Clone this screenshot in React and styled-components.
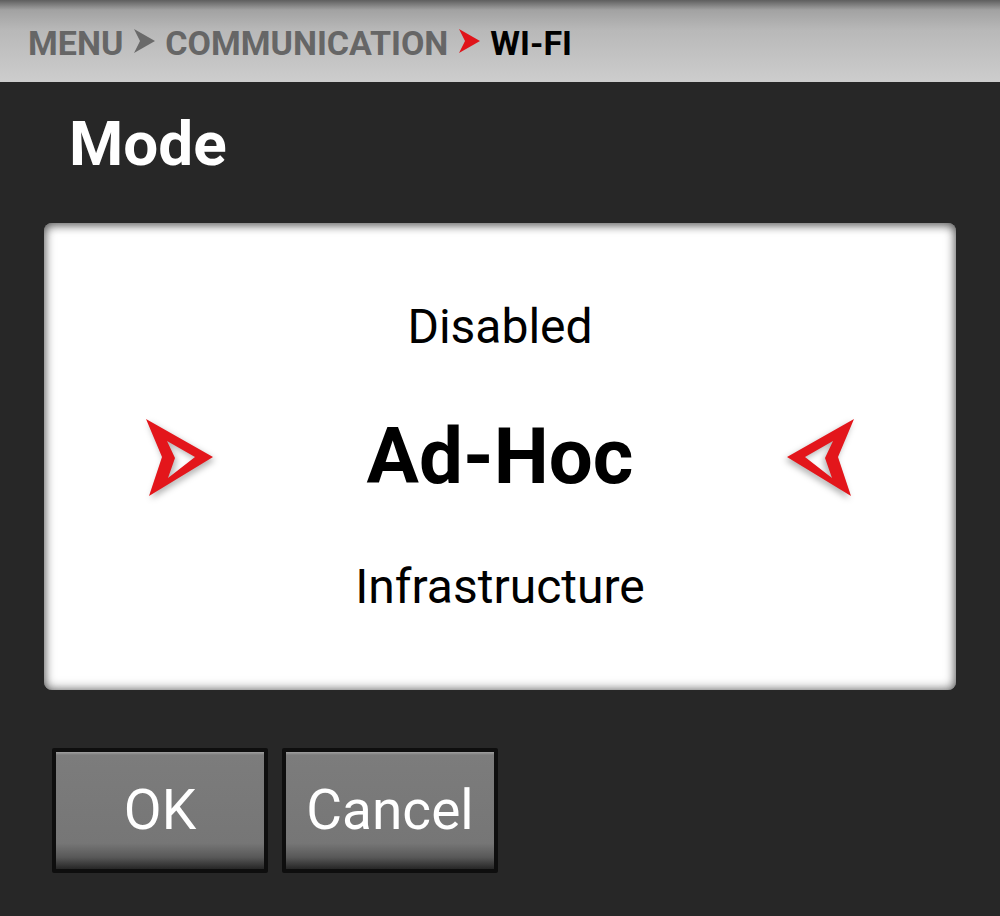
import { styled, createGlobalStyle } from "styled-components";

const GlobalStyle = createGlobalStyle`
  body {
    margin: 0;
    background: #272727;
    font-family: Roboto, "Liberation Sans", sans-serif;
  }
`;

const Screen = styled.div`
  width: 1000px;
  height: 916px;
  background: #272727;
  display: flex;
  flex-direction: column;
  overflow: hidden;
`;

const Header = styled.header`
  height: 82px;
  flex-shrink: 0;
  display: flex;
  align-items: center;
  gap: 10px;
  padding-left: 28px;
  box-sizing: border-box;
  background: linear-gradient(#5e5e5e 0px, #a2a2a2 10px, #b8b8b8 30px, #cdcdcd 100%);
`;

const Crumb = styled.span`
  font-size: 34px;
  font-weight: 700;
  line-height: 34px;
  color: ${({ $current }) => ($current ? "#000" : "#666")};
  padding-top: 4px;
`;

const Body = styled.main`
  padding: 0 44px;
  display: flex;
  flex-direction: column;
`;

const Title = styled.h1`
  margin: 31px 0 0 25px;
  font-size: 62px;
  line-height: 62px;
  font-weight: 700;
  color: #fff;
`;

const Panel = styled.section`
  margin-top: 48px;
  height: 467px;
  background: #fff;
  border-radius: 8px;
  box-shadow: inset 0 0 12px rgba(0, 0, 0, 0.6), inset 0 3px 8px rgba(0, 0, 0, 0.3);
  display: grid;
  grid-template-columns: 80px 1fr 80px;
  align-items: center;
  padding: 0 96px;
`;

const OptionList = styled.div`
  display: flex;
  flex-direction: column;
  align-items: center;
  gap: 67px;
`;

const Option = styled.div`
  color: #000;
  font-size: ${({ $selected }) => ($selected ? "78px" : "48px")};
  line-height: ${({ $selected }) => ($selected ? "78px" : "48px")};
  font-weight: ${({ $selected }) => ($selected ? 700 : 400)};
`;

const ArrowSvg = styled.svg`
  width: 80px;
  height: 90px;
  transform: ${({ $flip }) => ($flip ? "scaleX(-1)" : "none")};
  filter: drop-shadow(2px 3px 3px rgba(0, 0, 0, 0.3));
`;

const ButtonRow = styled.div`
  display: flex;
  gap: 14px;
  margin-top: 58px;
  padding-left: 8px;
`;

const Button = styled.button`
  width: 216px;
  height: 125px;
  box-sizing: border-box;
  border: 4px solid #0e0e0e;
  border-radius: 2px;
  background: linear-gradient(#a0a0a0 0px, #7c7c7c 3px, #767676 78%, #585858 90%, #262626 100%);
  color: #fff;
  font-family: Roboto, "Liberation Sans", sans-serif;
  font-size: 55px;
  line-height: 1;
  padding: 0;
  cursor: pointer;
`;

function CrumbArrow({ active }) {
  return (
    <svg width="22" height="26" viewBox="0 0 22 26">
      <polygon points="1,1 22,13 1,25 7,13" fill={active ? "#e0141a" : "#6a6a6a"} />
    </svg>
  );
}

function PickerArrow({ flip }) {
  return (
    <ArrowSvg $flip={flip} viewBox="0 0 80 90">
      <path
        fillRule="evenodd"
        fill="#e3161b"
        d="M6 7 L73 45 L9 84 L22 45 Z M27 29 L35 46 L28 66 L55 45 Z"
      />
    </ArrowSvg>
  );
}

export default function App() {
  return (
    <Screen>
      <GlobalStyle />
      <Header>
        <Crumb>MENU</Crumb>
        <CrumbArrow />
        <Crumb>COMMUNICATION</Crumb>
        <CrumbArrow active />
        <Crumb $current>WI-FI</Crumb>
      </Header>
      <Body>
        <Title>Mode</Title>
        <Panel>
          <PickerArrow />
          <OptionList>
            <Option>Disabled</Option>
            <Option $selected>Ad-Hoc</Option>
            <Option>Infrastructure</Option>
          </OptionList>
          <PickerArrow flip />
        </Panel>
        <ButtonRow>
          <Button>OK</Button>
          <Button>Cancel</Button>
        </ButtonRow>
      </Body>
    </Screen>
  );
}
